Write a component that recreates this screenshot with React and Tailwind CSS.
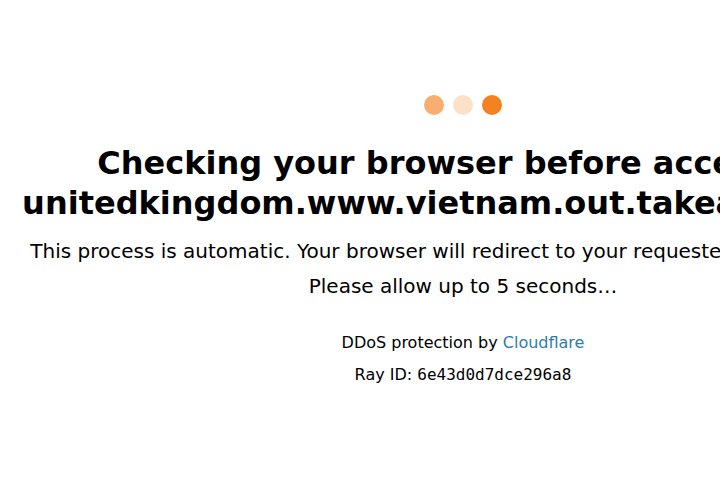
export default function App() {
  const font = { fontFamily: '"DejaVu Sans", sans-serif' };
  return (
    <div className="min-h-[480px] bg-white text-black" style={font}>
      <div className="w-[926px] text-center">
        <div className="flex justify-center gap-[9px] pt-[95px]">
          <span className="block h-5 w-5 rounded-full bg-[#f58220] opacity-[0.65]" />
          <span className="block h-5 w-5 rounded-full bg-[#f58220] opacity-[0.25]" />
          <span className="block h-5 w-5 rounded-full bg-[#f58220]" />
        </div>
        <h1 className="mt-[28px] text-[32px] font-bold leading-[40px]">
          Checking your browser before accessing
          <br />
          unitedkingdom.www.vietnam.out.takeaway.com.
        </h1>
        <p className="mt-[11px] text-[20px] leading-[35px]">
          This process is automatic. Your browser will redirect to your requested content shortly.
        </p>
        <p className="text-[20px] leading-[35px]">Please allow up to 5 seconds…</p>
        <div className="mt-[23px] text-[16px] leading-[32px]">
          <div>
            DDoS protection by <span className="text-[#2c7cb0]">Cloudflare</span>
          </div>
          <div>
            Ray ID: <code style={{ fontFamily: '"DejaVu Sans Mono", monospace' }}>6e43d0d7dce296a8</code>
          </div>
        </div>
      </div>
    </div>
  );
}
